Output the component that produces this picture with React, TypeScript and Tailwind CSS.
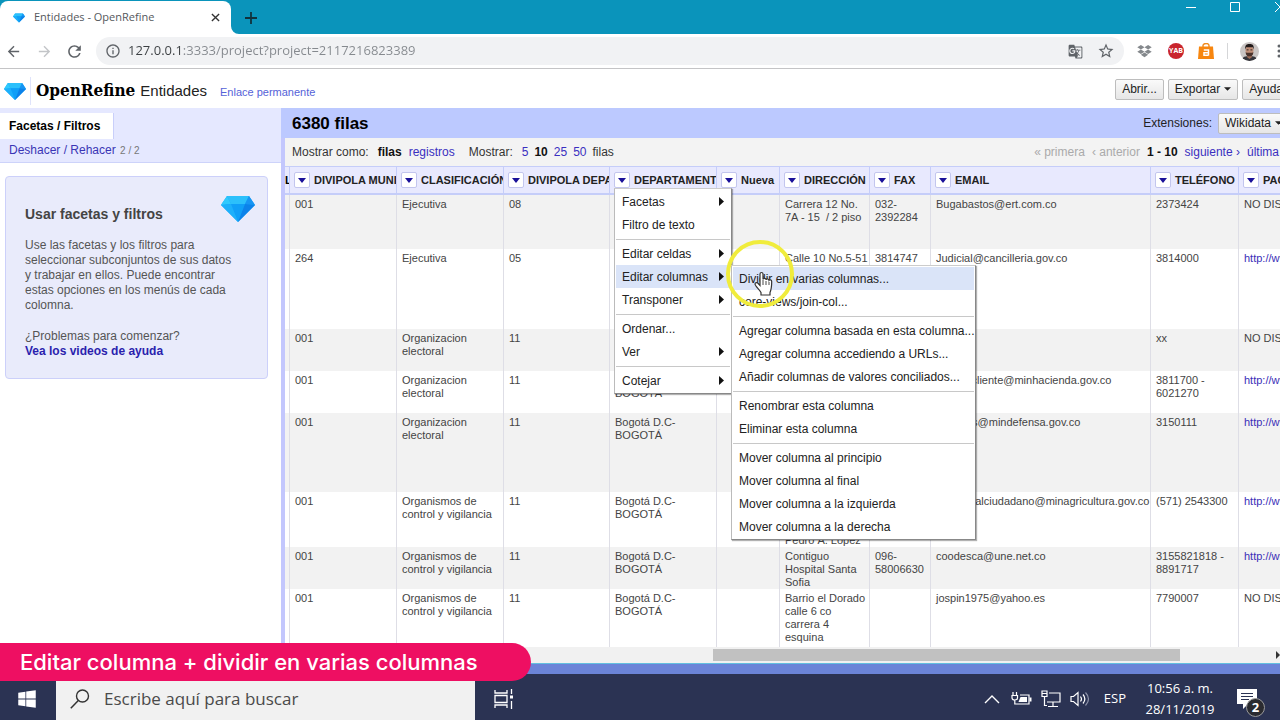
import React from "react";
import {
  MdArrowBack,
  MdArrowForward,
  MdGTranslate,
  MdInfoOutline,
  MdRefresh,
  MdStarBorder,
} from "react-icons/md";
import { FaDropbox, FaWindows } from "react-icons/fa";

const ARIAL = "font-['Liberation_Sans',Arial,sans-serif]";
const SEGOE = "font-['Open_Sans','Noto_Sans',sans-serif]";

function Diamond({ className }: { className: string }) {
  return (
    <svg viewBox="0 0 34 26" className={className} aria-hidden="true">
      <path d="M6 0h22l6 9-17 17L0 9z" fill="#12a5f7" />
      <path d="M6 0h22l-4 8H10z" fill="#2cc0fb" />
      <path d="M6 0 0 9l10-1z" fill="#30cafd" />
      <path d="M28 0l6 9-10-1z" fill="#1795f3" />
      <path d="M10 8h14l-7 18z" fill="#109ff7" />
      <path d="M24 8l10 1-17 17z" fill="#0c82ea" />
      <path d="M0 9l10-1 7 18z" fill="#1db0fb" />
    </svg>
  );
}

function TabStrip() {
  return (
    <div className={`flex h-[34px] shrink-0 items-end bg-[#0a94bb] ${SEGOE}`}>
      <div className="relative flex h-[33px] w-[231px] items-center rounded-t-lg bg-white pl-[13px] pr-2">
        <Diamond className="h-[10px] w-3" />
        <span className="ml-[9px] flex-1 text-[11px] text-[#55585c]">Entidades - OpenRefine</span>
        <button type="button" aria-label="Cerrar pestaña" className="flex h-4 w-4 items-center justify-center">
          <svg viewBox="0 0 10 10" className="h-[9px] w-[9px]">
            <path d="M1 1l8 8M9 1L1 9" stroke="#333" strokeWidth="1.5" />
          </svg>
        </button>
        <svg viewBox="0 0 8 8" className="absolute bottom-0 left-full h-2 w-2" aria-hidden="true">
          <path d="M0 0v8h8A8 8 0 0 1 0 0z" fill="#fff" />
        </svg>
      </div>
      <button type="button" aria-label="Nueva pestaña" className="ml-3 flex h-[33px] w-4 items-center justify-center">
        <svg viewBox="0 0 12 12" className="h-3 w-3">
          <path d="M6 0v12M0 6h12" stroke="#12323c" strokeWidth="1.8" />
        </svg>
      </button>
      <div className="-mr-[6px] ml-auto flex h-full items-start gap-[34px] pt-[2px] text-white">
        <button type="button" aria-label="Minimizar">
          <svg viewBox="0 0 10 10" className="h-[10px] w-[10px]">
            <path d="M0 5.5h10" stroke="currentColor" />
          </svg>
        </button>
        <button type="button" aria-label="Maximizar">
          <svg viewBox="0 0 10 10" className="h-[10px] w-[10px]">
            <path d="M.5.5h9v9h-9z" fill="none" stroke="currentColor" />
          </svg>
        </button>
        <button type="button" aria-label="Cerrar">
          <svg viewBox="0 0 12 10" className="h-[10px] w-3">
            <path d="M1 0l10 10M11 0L1 10" stroke="currentColor" />
          </svg>
        </button>
      </div>
    </div>
  );
}

function AddressBar() {
  return (
    <div className={`flex h-[35px] shrink-0 items-center border-b border-[#c4c4c6] bg-white pl-[5px] text-[#5f6368] ${SEGOE}`}>
      <button type="button" aria-label="Atrás"><MdArrowBack className="h-[17px] w-[17px]" /></button>
      <button type="button" aria-label="Adelante" className="ml-[14px] text-[#c3c5c8]"><MdArrowForward className="h-[17px] w-[17px]" /></button>
      <button type="button" aria-label="Recargar" className="ml-3"><MdRefresh className="h-[19px] w-[19px]" /></button>
      <div className="ml-3 flex h-7 flex-1 items-center rounded-full bg-[#f1f2f4] pl-[9px] pr-[9px]">
        <MdInfoOutline className="h-4 w-4" />
        <input
          type="text"
          aria-label="Dirección"
          defaultValue="127.0.0.1:3333/project?project=2117216823389"
          className="ml-[7px] min-w-0 flex-1 bg-[linear-gradient(to_right,#3c4043_53px,#85898e_53px)] bg-clip-text text-[13px] text-transparent outline-none"
        />
        <button type="button" aria-label="Traducir"><MdGTranslate className="h-[15px] w-[15px]" /></button>
        <button type="button" aria-label="Marcador" className="ml-[14px]"><MdStarBorder className="h-[18px] w-[18px]" /></button>
      </div>
      <button type="button" aria-label="Dropbox" className="ml-[13px] text-[#84888c]"><FaDropbox className="h-[14px] w-[15px]" /></button>
      <button type="button" aria-label="Extensión YAB" className="ml-4 flex h-4 w-4 items-center justify-center rounded-full bg-[#c9252d] text-[7px] font-bold text-white">YAB</button>
      <button type="button" aria-label="Compras" className="ml-[14px]">
        <svg viewBox="0 0 16 16" className="h-4 w-4">
          <path d="M5 4V2.500a3 2 0 0 1 6 0V4" fill="none" stroke="#f08a1c" strokeWidth="1.400" />
          <path d="M1 3.500h14l1 12.500H0z" fill="#f7860f" />
          <path d="M5.800 7h4.700v5.500M10.500 9.700H6v2.500h4.500" fill="none" stroke="#fff" strokeWidth="1.500" />
        </svg>
      </button>
      <span className="ml-[13px] h-4 w-px bg-[#d5d6d8]" />
      <button type="button" aria-label="Perfil" className="ml-3">
        <svg viewBox="0 0 20 20" className="h-[19px] w-[19px]">
          <clipPath id="face"><circle cx="10" cy="10" r="10" /></clipPath>
          <g clipPath="url(#face)">
            <path d="M0 0h20v20H0z" fill="#c9c5c4" />
            <path d="M2 20c0-5 4-5 8-5s8 0 8 5z" fill="#34343a" />
            <path d="M7.500 12h5v4l-2.500 2-2.500-2z" fill="#9b6b57" />
            <ellipse cx="10" cy="9" rx="4.200" ry="5.500" fill="#c08f78" />
            <path d="M5.500 8C5 3 7 2 10 2s5 1 4.500 6l-1-2.500h-7z" fill="#221b1b" />
            <path d="M6 10.500c1 1 2 .800 4 .800s3 .200 4-.800c0 4-2 4.500-4 4.500s-4-.500-4-4.500z" fill="#4a322b" />
            <path d="M7 8.300h2M11 8.300h2" stroke="#2a2020" strokeWidth="1" />
          </g>
        </svg>
      </button>
      <button type="button" aria-label="Menú" className="-mr-px ml-[18px]">
        <svg viewBox="0 0 4 14" className="h-[14px] w-1">
          <circle cx="2" cy="2" r="1.500" fill="currentColor" />
          <circle cx="2" cy="7" r="1.500" fill="currentColor" />
          <circle cx="2" cy="12" r="1.500" fill="currentColor" />
        </svg>
      </button>
    </div>
  );
}

function Caret() {
  return (
    <svg viewBox="0 0 8 4" className="h-1 w-[7px]" aria-hidden="true">
      <path d="M0 0h8L4 4z" fill="#222" />
    </svg>
  );
}

function GreyButton({ children, className = "" }: { children: React.ReactNode; className?: string }) {
  return (
    <button
      type="button"
      className={`flex h-[21px] shrink-0 items-center gap-1 rounded-[2px] border border-[#bdbdbd] bg-gradient-to-b from-[#fafafa] to-[#e6e6e6] px-[6px] text-xs text-[#222] ${className}`}
    >
      {children}
    </button>
  );
}

function ProjectHeader() {
  return (
    <header className="flex h-[39px] shrink-0 items-center bg-white pl-1 pt-[5px]">
      <Diamond className="h-[17px] w-[22px]" />
      <span className="ml-1 h-7 w-px bg-[#dfe3fb]" />
      <h1 className="ml-[5px] font-['DejaVu_Serif_Condensed','DejaVu_Serif',serif] text-[17px] font-bold text-black">OpenRefine</h1>
      <span className="ml-[5px] text-[15px] text-[#222]">Entidades</span>
      <a href="#permalink" className="ml-[13px] pt-[2px] text-[11px] text-[#5562d8]">Enlace permanente</a>
      <div className="-mr-[10px] ml-auto flex gap-1 pb-[4px]">
        <GreyButton>Abrir...</GreyButton>
        <GreyButton>Exportar <Caret /></GreyButton>
        <GreyButton>Ayuda</GreyButton>
      </div>
    </header>
  );
}

function FacetPanel() {
  return (
    <aside className="flex w-[281px] shrink-0 flex-col bg-white">
      <div className="h-[55px] border-b border-[#cdd3fa] bg-[#e5e8ff] pt-[5px]">
        <button type="button" className="block h-[26px] border-r border-[#c9cffa] bg-white pl-[9px] pr-[13px] text-xs font-bold text-black">
          Facetas / Filtros
        </button>
        <button type="button" className="block pl-[9px] pt-[3px] text-xs text-[#3a35b5]">
          Deshacer / Rehacer <span className="ml-px text-[10px] text-[#777]">2 / 2</span>
        </button>
      </div>
      <section className="mx-[5px] mr-[13px] mt-[13px] rounded border border-[#ccd0fa] bg-[#e9ebfb] pb-[19px] pl-[19px] pr-[29px] pt-[18px] text-xs leading-[15px] text-[#555]">
        <div className="-mr-[17px] flex items-start justify-between">
          <h2 className="pt-[9px] text-sm font-bold text-[#444]">Usar facetas y filtros</h2>
          <Diamond className="mt-px h-[26px] w-[34px]" />
        </div>
        <p className="mt-[14px]">
          Use las facetas y los filtros para seleccionar subconjuntos de sus datos y trabajar en ellos. Puede encontrar
          estas opciones en los menús de cada colomna.
        </p>
        <p className="mt-4">¿Problemas para comenzar?</p>
        <a href="#ayuda" className="font-bold text-[#2b1fae]">Vea los videos de ayuda</a>
      </section>
    </aside>
  );
}

const COLUMNS = [
  { name: "DIVIPOLA MUNICIPIO", width: "w-[107px]" },
  { name: "CLASIFICACIÓN", width: "w-[107px]" },
  { name: "DIVIPOLA DEPARTAMENTO", width: "w-[106px]" },
  { name: "DEPARTAMENTO", width: "w-[107px]" },
  { name: "Nueva", width: "w-[63px]" },
  { name: "DIRECCIÓN", width: "w-[90px]" },
  { name: "FAX", width: "w-[61px]" },
  { name: "EMAIL", width: "w-[220px]" },
  { name: "TELÉFONO", width: "w-[88px]" },
  { name: "PAGINA WEB", width: "" },
];

const URL = "http://www.gov.co";
const BOG = "Bogotá D.C- BOGOTÁ";
const ROWS: { height: string; cells: string[] }[] = [
  { height: "h-[54px]", cells: ["001", "Ejecutiva", "08", "", "", "Carrera 12 No. 7A - 15\u00a0 / 2 piso", "032- 2392284", "Bugabastos@ert.com.co", "2373424", "NO DISPONIBLE"] },
  { height: "h-[80px]", cells: ["264", "Ejecutiva", "05", "", "", "Calle 10 No.5-51", "3814747", "Judicial@cancilleria.gov.co", "3814000", URL] },
  { height: "h-[42px]", cells: ["001", "Organizacion electoral", "11", "", "", "", "", "", "xx", "NO DISPONIBLE"] },
  { height: "h-[42px]", cells: ["001", "Organizacion electoral", "11", BOG, "", "", "", "atencincliente@minhacienda.gov.co", "3811700 - 6021270", URL] },
  { height: "h-[79px]", cells: ["001", "Organizacion electoral", "11", BOG, "", "", "", "usuarios@mindefensa.gov.co", "3150111", URL] },
  { height: "h-[55px]", cells: ["001", "Organismos de control y vigilancia", "11", BOG, "", "Avenida Jimenez No. 7A - 17 Edificio Pedro\u00a0A.\u00a0Lopez", "", "atenconalciudadano@minagricultura.gov.co", "(571) 2543300", URL] },
  { height: "h-[42px]", cells: ["001", "Organismos de control y vigilancia", "11", BOG, "", "Contiguo Hospital Santa Sofia", "096- 58006630", "coodesca@une.net.co", "3155821818 - 8891717", URL] },
  { height: "h-[60px]", cells: ["001", "Organismos de control y vigilancia", "11", BOG, "", "Barrio el Dorado calle 6 co carrera 4 esquina", "", "jospin1975@yahoo.es", "7790007", "NO DISPONIBLE"] },
];

function DataTable() {
  return (
    <table className="w-full min-w-[1061px] table-fixed border-separate border-spacing-0 text-left text-[11px] leading-[13px]">
      <thead>
        <tr className="h-[29px] bg-[#e8e9fe]">
          <th className="w-[5px] overflow-hidden border-b-2 border-r border-t border-[#c5cdf9] p-0">L</th>
          {COLUMNS.map((c) => (
            <th key={c.name} className={`${c.width} overflow-hidden border-b-2 border-r border-t border-[#c5cdf9] p-0 pl-1`}>
              <div className="flex items-center gap-1 whitespace-nowrap text-[#222]">
                <button type="button" aria-label={`Menú de ${c.name}`} className="flex h-4 w-4 shrink-0 items-center justify-center rounded-[2px] border border-[#c3c6ee] bg-white">
                  <svg viewBox="0 0 8 5" className="h-[5px] w-2"><path d="M0 0h8L4 5z" fill="#1a1199" /></svg>
                </button>
                {c.name}
              </div>
            </th>
          ))}
        </tr>
      </thead>
      <tbody>
        {ROWS.map((r, i) => (
          <tr key={i} className={`${r.height} align-top text-[#444] odd:bg-[#f2f2f2] even:bg-white`}>
            <td className="border-r border-[#dedee6] p-0" />
            {r.cells.map((cell, j) => (
              <td key={j} className="overflow-hidden border-r border-[#dedee6] p-0 pl-[5px] pt-[3px]">
                {cell.startsWith("http") ? <a href={cell} className="text-[#3a2fb8]">{cell}</a> : cell}
              </td>
            ))}
          </tr>
        ))}
      </tbody>
    </table>
  );
}

function MenuItem({ label, arrow, active }: { label: string; arrow?: boolean; active?: boolean }) {
  return (
    <button
      type="button"
      role="menuitem"
      className={`flex h-[23px] w-full items-center justify-between whitespace-nowrap pl-[6px] pr-[6px] text-xs text-[#222] ${active ? "bg-[#dae4f8]" : ""}`}
    >
      {label}
      {arrow && (
        <svg viewBox="0 0 5 9" className="h-[9px] w-[5px]" aria-hidden="true"><path d="M0 0l5 4.500L0 9z" fill="#111" /></svg>
      )}
    </button>
  );
}

function Separator() {
  return <div role="separator" className="flex h-[6px] items-center"><span className="h-px w-full bg-[#c8c8c8]" /></div>;
}

const MENU_BOX = "absolute border border-b-[#888] border-l-[#bbb] border-r-[#888] border-t-[#ccc] bg-white p-px shadow-[1px_1px_1px_rgba(0,0,0,0.3)]";

function ColumnMenu() {
  return (
    <div role="menu" className={`${MENU_BOX} left-[333px] top-[80px] z-10 w-[118px]`}>
      <MenuItem label="Facetas" arrow />
      <MenuItem label="Filtro de texto" />
      <Separator />
      <MenuItem label="Editar celdas" arrow />
      <MenuItem label="Editar columnas" arrow active />
      <MenuItem label="Transponer" arrow />
      <Separator />
      <MenuItem label="Ordenar..." />
      <MenuItem label="Ver" arrow />
      <Separator />
      <MenuItem label="Cotejar" arrow />
      <div role="menu" className={`${MENU_BOX} left-[116px] top-[76px] w-[245px]`}>
        <MenuItem label="Dividir en varias columnas..." active />
        <MenuItem label="core-views/join-col..." />
        <Separator />
        <MenuItem label="Agregar columna basada en esta columna..." />
        <MenuItem label="Agregar columna accediendo a URLs..." />
        <MenuItem label="Añadir columnas de valores conciliados..." />
        <Separator />
        <MenuItem label="Renombrar esta columna" />
        <MenuItem label="Eliminar esta columna" />
        <Separator />
        <MenuItem label="Mover columna al principio" />
        <MenuItem label="Mover columna al final" />
        <MenuItem label="Mover columna a la izquierda" />
        <MenuItem label="Mover columna a la derecha" />
      </div>
      <svg viewBox="0 0 70 70" className="pointer-events-none absolute left-[110px] top-[50px] h-[70px] w-[70px]" aria-hidden="true">
        <circle cx="35" cy="35" r="32" fill="none" stroke="#f0ec3c" strokeWidth="4" />
        <path
          d="M36 56v-2.500c-1.500-3-6-6.500-6-8.500 0-1.500 2-2 3.200-.500l1.800 2V35c0-2 3-2 3 0v5.500c.300-1.500 2.800-1.500 3 .300.500-1.300 2.800-1 3 .500.700-1 2.700-.600 2.700 1.200 0 5-.200 7.500-1.700 11V56z"
          fill="#fff"
          stroke="#333"
          strokeWidth="1.200"
        />
        <path d="M38 41v5M41 42v4M44 43v3" stroke="#333" strokeWidth=".9" />
      </svg>
    </div>
  );
}

function GridPanel() {
  const link = "text-[#3a2fc0]";
  return (
    <main className="relative flex min-w-0 flex-1 flex-col">
      <div className="flex h-[30px] shrink-0 items-center overflow-hidden bg-[#bcc9ff] pl-[11px]">
        <h2 className="flex-1 pt-[2px] text-[17px] font-bold text-black">6380 filas</h2>
        <span className="pr-[6px] text-xs text-[#222]">Extensiones:</span>
        <GreyButton className="-mr-[9px]">Wikidata <Caret /></GreyButton>
      </div>
      <div className="flex min-h-0 flex-1 flex-col border-l-4 border-[#c3c7fd]">
        <div className="flex h-7 shrink-0 items-center overflow-hidden whitespace-nowrap bg-[#f3f3f3] pl-[7px] text-xs text-[#333]">
          Mostrar como:
          <b className="ml-[9px] text-[#111]">filas</b>
          <a href="#registros" className={`ml-[7px] ${link}`}>registros</a>
          <span className="ml-[14px]">Mostrar:</span>
          <a href="#5" className={`ml-[9px] ${link}`}>5</a>
          <b className="ml-[6px] text-[#111]">10</b>
          <a href="#25" className={`ml-[6px] ${link}`}>25</a>
          <a href="#50" className={`ml-[6px] ${link}`}>50</a>
          <span className="ml-[6px]">filas</span>
          <nav aria-label="Páginas" className="-mr-[9px] ml-auto flex gap-[7px]">
            <span className="text-[#aaa]">« primera</span>
            <span className="text-[#aaa]">‹ anterior</span>
            <b className="text-[#111]">1 - 10</b>
            <a href="#siguiente" className={link}>siguiente ›</a>
            <a href="#ultima" className={link}>última »</a>
          </nav>
        </div>
        <div className="min-h-0 flex-1 overflow-hidden bg-white">
          <DataTable />
        </div>
        <div className="flex h-4 shrink-0 items-center bg-[#f1f1f1]">
          <div className="ml-[43%] h-3 w-[47%] bg-[#c1c1c1]" />
          <svg viewBox="0 0 4 8" className="ml-auto h-2 w-1" aria-hidden="true"><path d="M0 0l4 4-4 4z" fill="#333" /></svg>
        </div>
      </div>
      <ColumnMenu />
    </main>
  );
}

function Taskbar() {
  return (
    <footer className={`flex h-[46px] shrink-0 bg-[#2b3353] text-white ${SEGOE}`}>
      <button type="button" aria-label="Inicio" className="flex w-14 items-center justify-center pr-[3px] pt-1"><FaWindows className="h-5 w-5" /></button>
      <label className="flex w-[419px] items-center bg-[#f1f1f1] pl-[14px] pt-1">
        <svg viewBox="0 0 20 20" className="h-5 w-5" aria-hidden="true">
          <circle cx="12.500" cy="7" r="6" fill="none" stroke="#333" strokeWidth="1.400" />
          <path d="M8.300 11.500L.800 19.300" stroke="#333" strokeWidth="1.500" />
        </svg>
        <input type="text" aria-label="Buscar" placeholder="Escribe aquí para buscar" className="ml-[14px] min-w-0 flex-1 bg-transparent text-[17px] outline-none placeholder:text-[#4a4a4a]" />
      </label>
      <button type="button" aria-label="Vista de tareas" className="ml-[19px] pt-1">
        <svg viewBox="0 0 20 20" className="h-5 w-5" fill="none" stroke="#fff" strokeWidth="1.300">
          <path d="M1 1v3h12V1M1 19v-3h12v3M1 6.500h12v7H1zM17.500 0v5M17.500 12v8" />
          <path d="M16 6.500h3v3h-3z" fill="#fff" stroke="none" />
        </svg>
      </button>
      <div className="ml-auto flex items-center pt-1">
        <svg viewBox="0 0 16 9" className="h-[9px] w-4" aria-hidden="true"><path d="M1 8l7-7 7 7" fill="none" stroke="#fff" strokeWidth="1.400" /></svg>
        <svg viewBox="0 0 21 16" className="ml-[11px] h-4 w-[21px]" fill="none" stroke="#fff" strokeWidth="1.200" aria-hidden="true">
          <path d="M2 1v3M5.500 1v3M1 4.500h5.500V7q0 2-2.700 2T1 7zM3.800 9v4H18V4H9" />
          <path d="M9.500 6h6.500v5H7.500z" fill="#fff" stroke="none" />
          <path d="M19.500 6.500v4" strokeWidth="2" />
        </svg>
        <svg viewBox="0 0 20 18" className="ml-[9px] h-[18px] w-5" fill="none" stroke="#fff" strokeWidth="1.200" aria-hidden="true">
          <path d="M8 3h11v9H6M12 12v4M7 16.500h10M1 1v5.500h5V1zM1 3.500h5M3.500 6.500v9H6" />
        </svg>
        <svg viewBox="0 0 20 16" className="ml-[9px] h-4 w-5" fill="none" stroke="#fff" strokeWidth="1.200" aria-hidden="true">
          <path d="M1 5.500h2.500L8 1.500v13l-4.500-4H1zM10.500 5.500q2 2.500 0 5M13 3.500q3.700 4.500 0 9" />
          <path d="M15.500 1.500q6 6.500 0 13" stroke="#8d92a8" />
        </svg>
        <span className="ml-[14px] text-[13px]">ESP</span>
        <div className="ml-[17px] w-[74px] whitespace-nowrap text-center text-[13px] leading-[21px]">
          <div>10:56 a. m.</div>
          <div>28/11/2019</div>
        </div>
        <button type="button" aria-label="Notificaciones" className="relative ml-5 mr-[23px]">
          <svg viewBox="0 0 20 20" className="h-5 w-5">
            <path d="M0 0h20v15h-9l-5 5v-5H0z" fill="#fff" />
            <path d="M4 4.500h12M4 7.500h12M4 10.500h8" stroke="#2b3353" strokeWidth="1.200" />
          </svg>
          <span className="absolute -bottom-2 -right-2 flex h-[19px] w-[19px] items-center justify-center rounded-full border border-[#9a9a9a] bg-[#2a2b30] text-[13px] font-bold leading-none">2</span>
        </button>
      </div>
    </footer>
  );
}

export default function App() {
  return (
    <div className={`relative flex h-screen flex-col overflow-hidden bg-white ${ARIAL}`}>
      <TabStrip />
      <AddressBar />
      <ProjectHeader />
      <div className="flex min-h-0 flex-1">
        <FacetPanel />
        <GridPanel />
      </div>
      <div className="h-[11px] shrink-0 border-t border-[#62bfe0] bg-[#6b84d8]" />
      <Taskbar />
      <div className="absolute bottom-[39px] left-0 z-20 flex h-[38px] w-[531px] items-center rounded-r-full bg-[#ee0f62] pl-5 font-['Inter',sans-serif] text-[22px] font-medium text-white">
        Editar columna + dividir en varias columnas
      </div>
    </div>
  );
}
